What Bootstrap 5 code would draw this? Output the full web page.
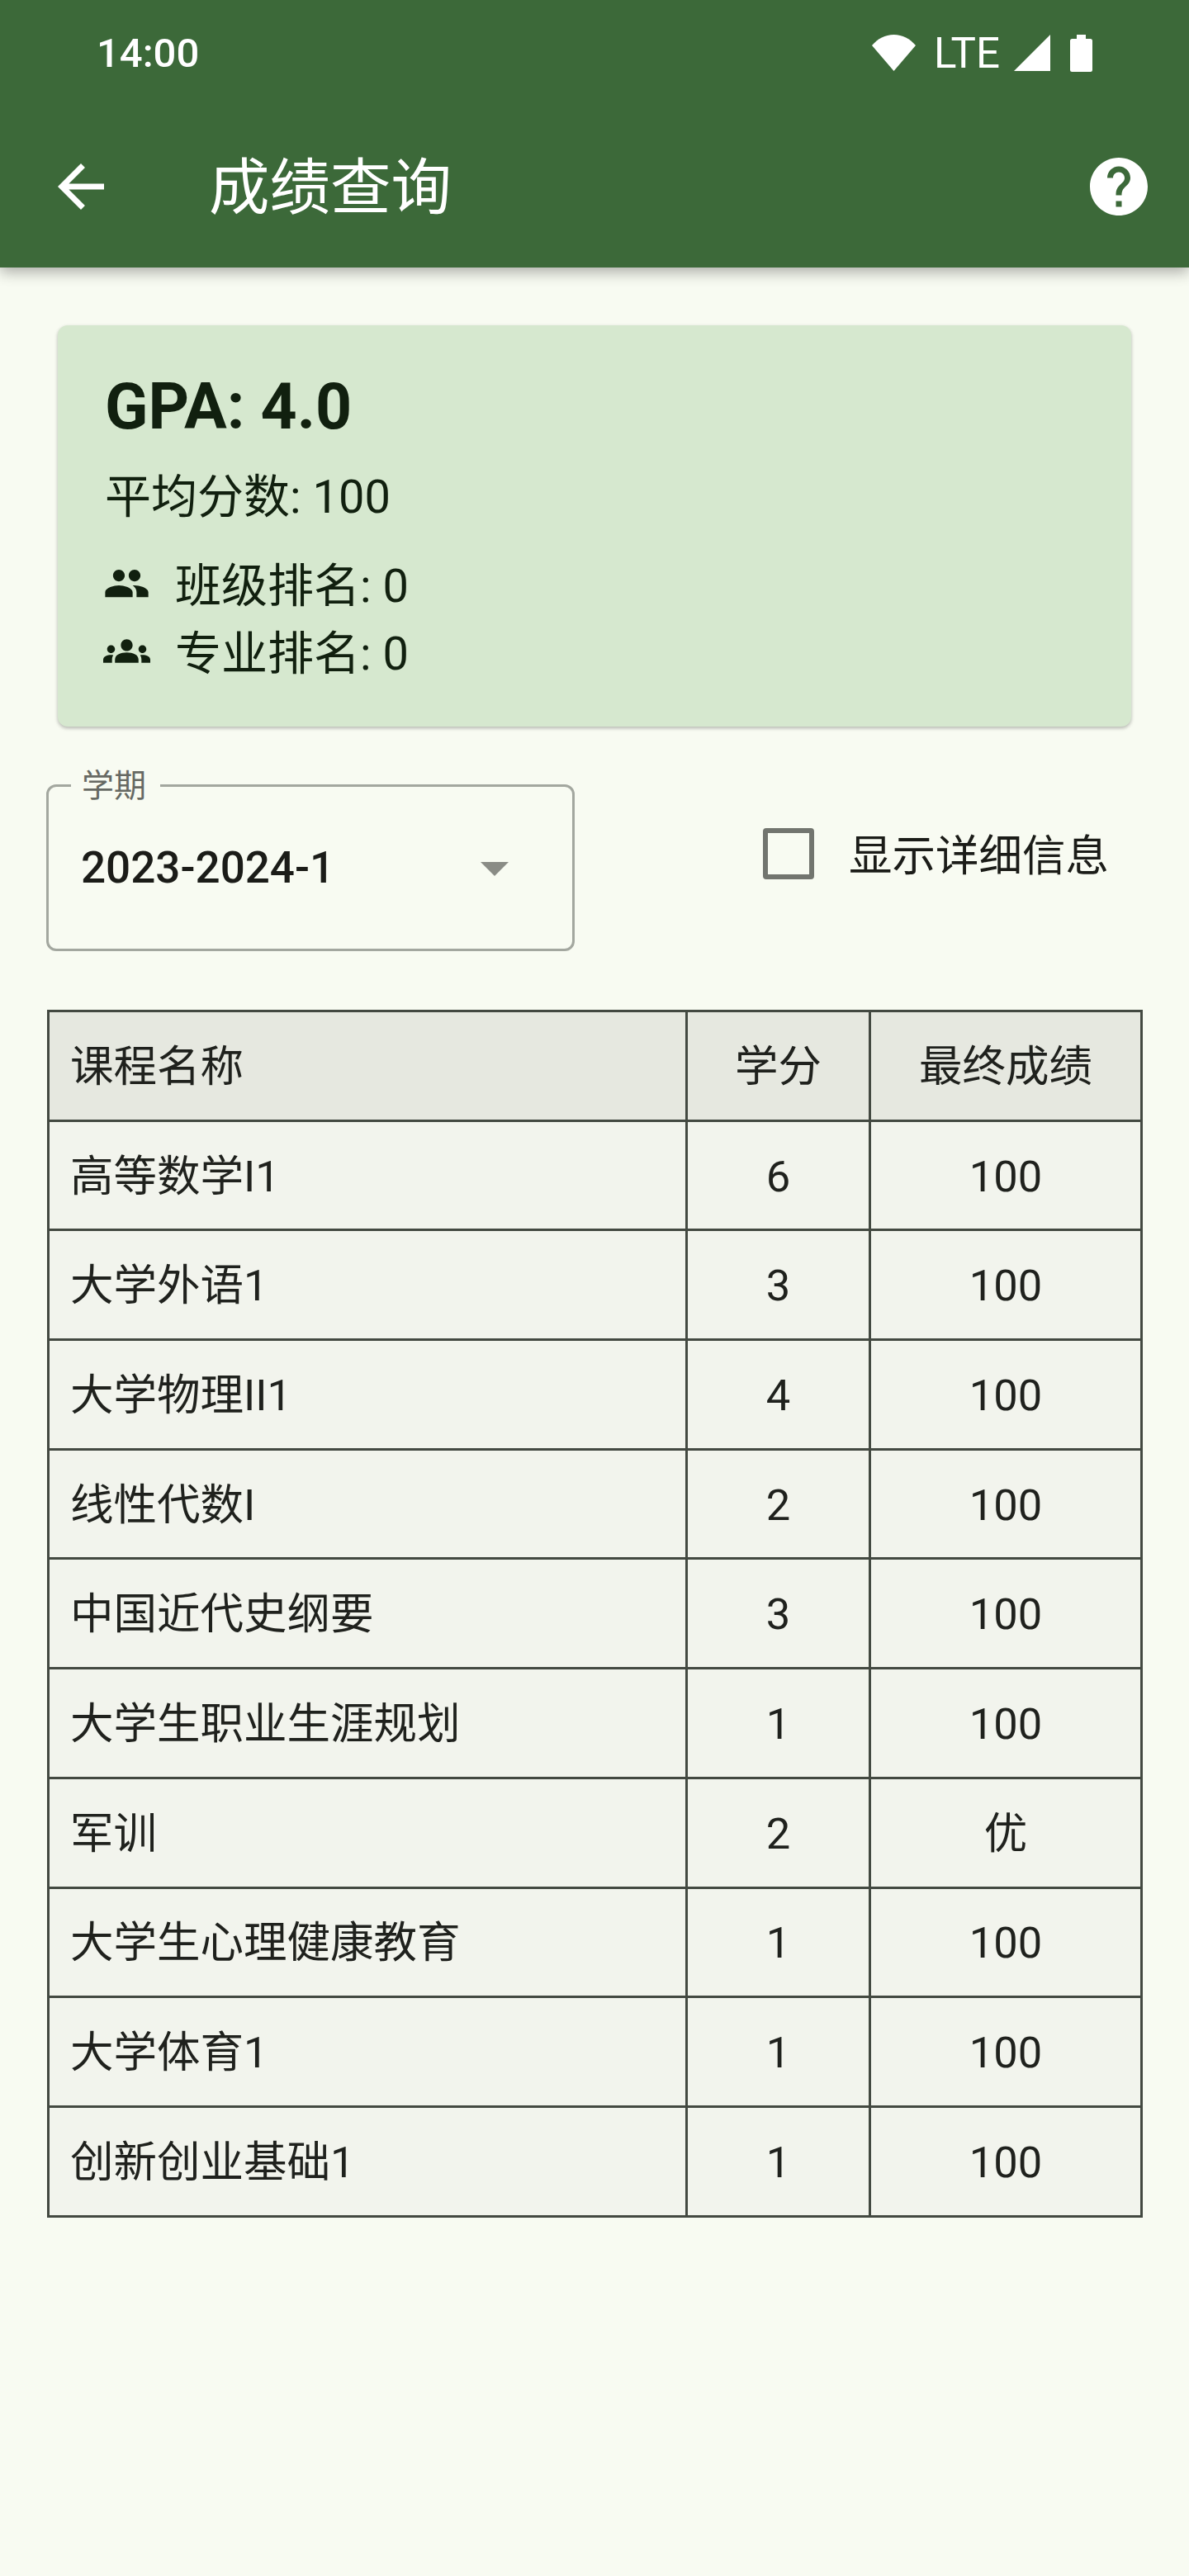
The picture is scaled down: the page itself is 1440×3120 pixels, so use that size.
<!DOCTYPE html>
<html lang="zh-CN">
  <head>
    <meta charset="UTF-8" />
    <title>成绩查询</title>
    <link
      href="https://cdn.jsdelivr.net/npm/bootstrap@5.3.0/dist/css/bootstrap.min.css"
      rel="stylesheet"
    />
    <style>
      html, body { height: 100%; }
      body {
        background: #f8fbf2;
        font-family: Roboto, "Noto Sans CJK SC", sans-serif;
        color: #1b1c18;
        font-size: 52.5px;
        overflow: hidden;
      }
      .app-bar {
        height: 324px;
        background: #3c6939;
        color: #fff;
        box-shadow: 0 6px 16px rgba(0, 0, 0, 0.3);
      }
      .status-row {
        height: 128px;
        padding: 0 117px;
      }
      .clock { font-size: 49px; font-weight: 500; line-height: 1; }
      .lte { font-size: 51px; line-height: 1; margin: 0 17px 0 22px; }
      .status-row svg { display: block; }
      .title-row { height: 112px; padding: 0 43px 0 56px; margin-top: 42px; }
      .page-title { font-size: 73.5px; line-height: 1; margin: 6px 0 0 113px; font-weight: 400; }
      .title-row svg { width: 84px; height: 84px; flex: none; }

      .gpa-card {
        margin: 70px 70px 0;
        height: 486px;
        padding: 49px 57px 0;
        background: #d6e8cf;
        color: #11200f;
        border: 0;
        border-radius: 12px;
        box-shadow: 0 2px 4px rgba(0, 0, 0, 0.28);
      }
      .gpa-value { font-size: 77px; font-weight: 700; line-height: 100px; margin: 0; }
      .avg-score { font-size: 56px; line-height: 82px; margin: 18px 0 26px; }
      .rank-row { font-size: 56px; line-height: 82px; gap: 30px; }
      .rank-row svg { width: 57px; height: 57px; flex: none; margin-left: -2px; margin-top: -8px; }

      .filter-row { margin: 70px 56px 0; height: 202px; }
      .term-box {
        position: relative;
        width: 640px;
        height: 202px;
        border: 3px solid #a3a79f;
        border-radius: 12px;
        padding: 0 77px 0 39px;
      }
      .term-label {
        position: absolute;
        top: -26px;
        left: 27px;
        padding: 0 17px 0 13px;
        background: #f8fbf2;
        color: #666963;
        font-size: 39px;
        line-height: 50px;
      }
      .term-value { font-size: 53px; font-weight: 500; line-height: 1; }
      .term-caret {
        width: 0;
        height: 0;
        margin-top: 3px;
        border-left: 17.5px solid transparent;
        border-right: 17.5px solid transparent;
        border-top: 17px solid #8a8c86;
      }
      .detail-check { margin: 0 41px 0 0; gap: 42px; padding-bottom: 35px; }
      .detail-check span { margin-top: 8px; }
      .detail-check input.check-box {
        appearance: none;
        width: 62px;
        height: 62px;
        margin: 0;
        border: 6px solid #72756f;
        border-radius: 4px;
        background: transparent;
        flex: none;
      }

      .score-wrap { margin: 71px 56px 0 57px; }
      .score-table {
        width: 1327px;
        table-layout: fixed;
        border-collapse: collapse;
        margin: 0;
      }
      .score-table th, .score-table td {
        height: 132.7px;
        padding: 3px 25px 0;
        border: 3px solid #434941;
        font-size: 52.5px;
        font-weight: 400;
        line-height: 1.2;
        vertical-align: middle;
        color: #1f211d;
        background: #f2f4ed;
        box-shadow: none;
      }
      .score-table th { background: #e6e8e0; }
      .name-col { width: 773px; }
      .credit-col { width: 222px; }
    </style>
  </head>
  <body>
    <header class="app-bar">
      <div class="status-row d-flex align-items-center">
        <span class="clock me-auto">14:00</span>
        <svg width="53" height="44" viewBox="0 0 53 44"><path d="M0 13C7 5 16 0 26.500 0S46 5 53 13L26.500 44z" fill="#fff"/></svg>
        <span class="lte">LTE</span>
        <svg width="44" height="44" viewBox="0 0 44 44"><path d="M44 0V44H0z" fill="#fff"/></svg>
        <svg class="ms-4" width="27" height="45" viewBox="0 0 27 45"><path d="M8 0H19V5H24.500Q27 5 27 7.500V42.500Q27 45 24.500 45H2.500Q0 45 0 42.500V7.500Q0 5 2.500 5H8z" fill="#fff"/></svg>
      </div>
      <div class="title-row d-flex align-items-center">
        <svg viewBox="0 0 24 24" fill="#fff"><path d="M20 11H7.830l5.590-5.590L12 4l-8 8 8 8 1.410-1.410L7.830 13H20v-2z"/></svg>
        <h1 class="page-title me-auto">成绩查询</h1>
        <svg viewBox="0 0 24 24" fill="#fff"><path d="M12 2C6.480 2 2 6.480 2 12s4.480 10 10 10 10-4.480 10-10S17.520 2 12 2zm1 17h-2v-2h2v2zm2.070-7.750l-.9.920C13.450 12.900 13 13.500 13 15h-2v-.5c0-1.100.45-2.100 1.170-2.830l1.240-1.260c.37-.36.59-.86.59-1.410 0-1.100-.9-2-2-2s-2 .9-2 2H8c0-2.210 1.790-4 4-4s4 1.790 4 4c0 .88-.36 1.680-.93 2.250z"/></svg>
      </div>
    </header>

    <div class="card gpa-card">
      <p class="gpa-value">GPA: 4.0</p>
      <p class="avg-score">平均分数: 100</p>
      <div class="rank-row d-flex align-items-center">
        <svg viewBox="0 0 24 24" fill="currentColor"><path d="M16 11c1.660 0 2.990-1.340 2.990-3S17.660 5 16 5c-1.660 0-3 1.340-3 3s1.340 3 3 3zm-8 0c1.660 0 2.990-1.340 2.990-3S9.660 5 8 5C6.340 5 5 6.340 5 8s1.340 3 3 3zm0 2c-2.330 0-7 1.170-7 3.500V19h14v-2.500c0-2.330-4.670-3.500-7-3.500zm8 0c-.29 0-.62.02-.97.05 1.160.84 1.970 1.970 1.970 3.450V19h6v-2.500c0-2.330-4.670-3.500-7-3.500z"/></svg>
        <span>班级排名: 0</span>
      </div>
      <div class="rank-row d-flex align-items-center">
        <svg viewBox="0 0 24 24" fill="currentColor"><path d="M12 12.750c1.630 0 3.070.39 4.240.9 1.080.48 1.760 1.560 1.760 2.730V18H6v-1.610c0-1.180.68-2.260 1.760-2.730 1.170-.52 2.610-.91 4.240-.91zM4 13c1.100 0 2-.9 2-2s-.9-2-2-2-2 .9-2 2 .9 2 2 2zm1.130 1.100c-.37-.06-.74-.1-1.130-.1-.99 0-1.930.21-2.780.58C.48 14.900 0 15.620 0 16.430V18h4.500v-1.610c0-.83.23-1.610.63-2.290zM20 13c1.100 0 2-.9 2-2s-.9-2-2-2-2 .9-2 2 .9 2 2 2zm4 3.430c0-.81-.48-1.530-1.220-1.850-.85-.37-1.790-.58-2.780-.58-.39 0-.76.04-1.130.1.4.68.63 1.460.63 2.290V18H24v-1.570zM12 6c1.660 0 3 1.340 3 3s-1.340 3-3 3-3-1.340-3-3 1.340-3 3-3z"/></svg>
        <span>专业排名: 0</span>
      </div>
    </div>

    <div class="filter-row d-flex align-items-center justify-content-between">
      <div class="term-box d-flex align-items-center justify-content-between">
        <span class="term-label">学期</span>
        <span class="term-value">2023-2024-1</span>
        <span class="term-caret"></span>
      </div>
      <label class="detail-check d-flex align-items-center">
        <input class="check-box" type="checkbox" />
        <span>显示详细信息</span>
      </label>
    </div>

    <div class="score-wrap">
      <table class="table score-table">
        <colgroup>
          <col class="name-col" />
          <col class="credit-col" />
          <col />
        </colgroup>
        <thead>
          <tr><th>课程名称</th><th class="text-center">学分</th><th class="text-center">最终成绩</th></tr>
        </thead>
        <tbody>
          <tr><td>高等数学I1</td><td class="text-center">6</td><td class="text-center">100</td></tr>
          <tr><td>大学外语1</td><td class="text-center">3</td><td class="text-center">100</td></tr>
          <tr><td>大学物理II1</td><td class="text-center">4</td><td class="text-center">100</td></tr>
          <tr><td>线性代数I</td><td class="text-center">2</td><td class="text-center">100</td></tr>
          <tr><td>中国近代史纲要</td><td class="text-center">3</td><td class="text-center">100</td></tr>
          <tr><td>大学生职业生涯规划</td><td class="text-center">1</td><td class="text-center">100</td></tr>
          <tr><td>军训</td><td class="text-center">2</td><td class="text-center">优</td></tr>
          <tr><td>大学生心理健康教育</td><td class="text-center">1</td><td class="text-center">100</td></tr>
          <tr><td>大学体育1</td><td class="text-center">1</td><td class="text-center">100</td></tr>
          <tr><td>创新创业基础1</td><td class="text-center">1</td><td class="text-center">100</td></tr>
        </tbody>
      </table>
    </div>
  </body>
</html>
